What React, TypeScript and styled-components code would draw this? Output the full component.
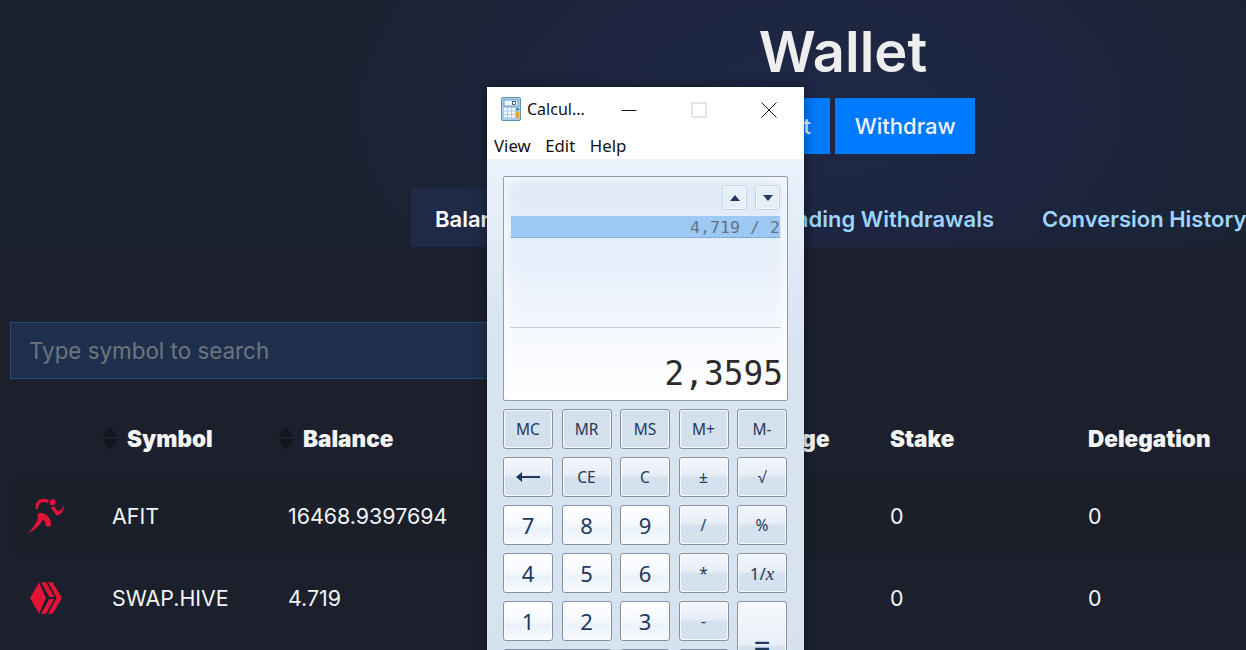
import React from "react";
import styled, { createGlobalStyle } from "styled-components";

const GlobalStyle = createGlobalStyle`
  html, body {
    margin: 0;
    height: 100%;
    background: #1b202c;
  }
  body {
    font-family: Inter, "Noto Sans", sans-serif;
    overflow: hidden;
  }
`;

const keypad = [
  { label: "MC", kind: "memory" },
  { label: "MR", kind: "memory" },
  { label: "MS", kind: "memory" },
  { label: "M+", kind: "memory" },
  { label: "M-", kind: "memory" },
  { label: "back", kind: "op" },
  { label: "CE", kind: "op" },
  { label: "C", kind: "op" },
  { label: "±", kind: "op" },
  { label: "√", kind: "op" },
  { label: "7", kind: "digit" },
  { label: "8", kind: "digit" },
  { label: "9", kind: "digit" },
  { label: "/", kind: "op" },
  { label: "%", kind: "op" },
  { label: "4", kind: "digit" },
  { label: "5", kind: "digit" },
  { label: "6", kind: "digit" },
  { label: "*", kind: "op" },
  { label: "1/x", kind: "op" },
  { label: "1", kind: "digit" },
  { label: "2", kind: "digit" },
  { label: "3", kind: "digit" },
  { label: "-", kind: "op" },
  { label: "=", kind: "equals" },
  { label: "0", kind: "zero" },
  { label: ",", kind: "digit" },
  { label: "+", kind: "op" },
];

function RunnerLogo() {
  return (
    <svg width="38" height="38" viewBox="80 235 115 113" fill="#e31337">
      <circle cx="158" cy="250" r="9" />
      <path d="M107 270 C103 250 118 232 146 243 L144 252 C128 246 116 250 113 270 Z" />
      <path d="M152 266 L162 262 L174 278 L184 272 L192 258 C192 278 178 292 170 290 Z" />
      <path d="M112 285 C125 278 142 286 150 302 C154 312 153 318 151 323 L136 322 C138 312 134 305 128 302 C122 318 104 332 83 345 C95 330 108 315 113 300 Z" />
    </svg>
  );
}

function HiveLogo() {
  return (
    <svg width="34" height="34" viewBox="27 24 102 102" fill="#e31337">
      <path d="M30 75 L57 28 L78 75 L57 122 Z" />
      <path d="M63 28 L78 28 L103 72 L88 72 Z" />
      <path d="M63 122 L78 122 L103 78 L88 78 Z" />
      <path d="M84 28 L98 28 L126 75 L98 122 L84 122 L110 75 Z" />
    </svg>
  );
}

function CalcIcon() {
  return (
    <svg width="20" height="24" viewBox="0 0 20 24">
      <rect x="0.5" y="0.5" width="19" height="23" rx="1.5" fill="#a9cde6" stroke="#5d93b8" />
      <rect x="3" y="3" width="14" height="6" fill="#eef7fd" stroke="#5a8fb5" strokeWidth="0.8" />
      <rect x="11.5" y="4.5" width="3" height="3" fill="none" stroke="#345" strokeWidth="0.8" />
      <g fill="#f5fafd">
        <rect x="3" y="11" width="3" height="2.5" />
        <rect x="7" y="11" width="3" height="2.5" />
        <rect x="11" y="11" width="3" height="2.5" />
        <rect x="3" y="14.5" width="3" height="2.5" />
        <rect x="7" y="14.5" width="3" height="2.5" />
        <rect x="11" y="14.5" width="3" height="2.5" />
        <rect x="3" y="18" width="3" height="2.5" />
        <rect x="7" y="18" width="3" height="2.5" />
        <rect x="11" y="18" width="3" height="2.5" />
      </g>
      <rect x="15" y="14.5" width="3" height="6.5" fill="#f0a431" />
      <rect x="15" y="11" width="3" height="2.5" fill="#4f8fc0" />
    </svg>
  );
}

function BackArrow() {
  return (
    <svg width="24" height="12" viewBox="0 0 24 12" fill="#1e395b">
      <path d="M0 6 L6 1 V5 H24 V7 H6 V11 Z" />
    </svg>
  );
}

function SortHeader({ children }: { children: React.ReactNode }) {
  return (
    <HeadLabel>
      <SortIcon viewBox="0 0 16 24" width="16" height="24">
        <path d="M8 0 L16 11 L0 11 Z" />
        <path d="M0 13 L16 13 L8 24 Z" />
      </SortIcon>
      {children}
    </HeadLabel>
  );
}

function keyContent(label: string) {
  if (label === "back") return <BackArrow />;
  if (label === "1/x") {
    return (
      <Reciprocal>
        1/<em>x</em>
      </Reciprocal>
    );
  }
  return label;
}

export default function App() {
  return (
    <Page>
      <GlobalStyle />
      <Hero>
        <Title>Wallet</Title>
        <Actions>
          <ActionButton>Deposit</ActionButton>
          <ActionButton>Withdraw</ActionButton>
        </Actions>
        <Tabs>
          <Tab $active>Balances</Tab>
          <Tab>Pending Withdrawals</Tab>
          <Tab>Conversion History</Tab>
        </Tabs>
      </Hero>

      <Content>
        <SearchInput placeholder="Type symbol to search" readOnly />
        <TableHead>
          <span />
          <SortHeader>Symbol</SortHeader>
          <SortHeader>Balance</SortHeader>
          <HeadText>Exchange</HeadText>
          <HeadText>Stake</HeadText>
          <HeadText>Delegation</HeadText>
        </TableHead>
        <Row $striped>
          <IconCell><RunnerLogo /></IconCell>
          <Cell>AFIT</Cell>
          <Cell>16468.9397694</Cell>
          <Cell>0</Cell>
          <Cell>0</Cell>
          <Cell>0</Cell>
        </Row>
        <Row>
          <IconCell><HiveLogo /></IconCell>
          <Cell>SWAP.HIVE</Cell>
          <Cell>4.719</Cell>
          <Cell>0</Cell>
          <Cell>0</Cell>
          <Cell>0</Cell>
        </Row>
      </Content>

      <CalcWindow>
        <TitleBar>
          <CalcIcon />
          <WindowTitle>Calcul...</WindowTitle>
          <WindowControls>
            <Control>
              <svg width="16" height="16" viewBox="0 0 16 16"><path d="M0.5 8.5 H15.5" stroke="#111" /></svg>
            </Control>
            <Control>
              <svg width="16" height="16" viewBox="0 0 16 16"><rect x="1" y="1" width="14" height="14" fill="none" stroke="#ccc" /></svg>
            </Control>
            <Control>
              <svg width="16" height="16" viewBox="0 0 16 16"><path d="M0.5 0.5 L15.5 15.5 M15.5 0.5 L0.5 15.5" stroke="#111" /></svg>
            </Control>
          </WindowControls>
        </TitleBar>
        <MenuBar>
          <span>View</span>
          <span>Edit</span>
          <span>Help</span>
        </MenuBar>
        <CalcBody>
          <Display>
            <SpinRow>
              <SpinButton>
                <svg width="10" height="6" viewBox="0 0 10 6"><path d="M5 0 L10 6 H0 Z" fill="#1e395b" /></svg>
              </SpinButton>
              <SpinButton>
                <svg width="10" height="6" viewBox="0 0 10 6"><path d="M0 0 H10 L5 6 Z" fill="#1e395b" /></svg>
              </SpinButton>
            </SpinRow>
            <HistoryLine>4,719 / 2</HistoryLine>
            <Divider />
            <ResultValue>2,3595</ResultValue>
          </Display>
          <Keypad>
            {keypad.map((key) => (
              <Key key={key.label} $kind={key.kind}>
                {keyContent(key.label)}
              </Key>
            ))}
          </Keypad>
        </CalcBody>
      </CalcWindow>
    </Page>
  );
}

const Page = styled.div`
  position: relative;
  width: 1246px;
  height: 650px;
  overflow: hidden;
  background: #1b202c;
  color: #f1f1f1;
`;

const Hero = styled.header`
  box-sizing: border-box;
  height: 247px;
  padding: 22px 0 0 440px;
  display: flex;
  flex-direction: column;
  align-items: center;
  background: radial-gradient(ellipse 520px 300px at 820px 110px, #1f2845 0%, #1d2540 45%, #1a2330 100%);
`;

const Title = styled.h1`
  margin: 0;
  height: 60px;
  font-size: 56px;
  line-height: 60px;
  font-weight: 600;
  color: #eeeeee;
`;

const Actions = styled.div`
  margin-top: 16px;
  display: flex;
  gap: 5px;
`;

const ActionButton = styled.button`
  height: 56px;
  padding: 0 19.5px;
  border: none;
  background: #007bff;
  color: #f3f3ff;
  font-family: inherit;
  font-size: 22px;
  font-weight: 500;
`;

const Tabs = styled.nav`
  margin-top: 35px;
  width: 864px;
  flex: none;
  display: flex;
`;

const Tab = styled.a<{ $active?: boolean }>`
  height: 58px;
  padding: 2px 24px 0;
  box-sizing: border-box;
  display: flex;
  align-items: center;
  white-space: nowrap;
  font-size: 22px;
  font-weight: 600;
  color: ${(p) => (p.$active ? "#ffffff" : "#9ed4ff")};
  background: ${(p) => (p.$active ? "#202a47" : "transparent")};
  &:first-child {
    width: 333px;
  }
`;

const Content = styled.main`
  padding: 75px 0 0 10px;
`;

const SearchInput = styled.input`
  box-sizing: border-box;
  display: block;
  width: 700px;
  height: 57px;
  padding: 0 18px;
  background: #1e2f4d;
  border: 1px solid #28497a;
  font-family: inherit;
  font-size: 22.4px;
  outline: none;
  &::placeholder {
    color: #6c757d;
    opacity: 1;
  }
`;

const tableColumns = "89px 176px 430px 172px 198px 171px";

const TableHead = styled.div`
  box-sizing: border-box;
  margin-top: 24px;
  height: 72px;
  padding-bottom: 2px;
  display: grid;
  grid-template-columns: ${tableColumns};
  align-items: center;
  font-size: 22.5px;
  font-weight: 900;
  color: #f4f4f4;
`;

const HeadLabel = styled.span`
  display: flex;
  align-items: center;
  gap: 9px;
`;

const HeadText = styled.span`
  padding-left: 13px;
`;

const SortIcon = styled.svg`
  fill: #11161f;
  flex: none;
  margin-left: 3px;
`;

const Row = styled.div<{ $striped?: boolean }>`
  height: 82px;
  display: grid;
  grid-template-columns: ${tableColumns};
  align-items: center;
  background: ${(p) => (p.$striped ? "#1a1f2a" : "transparent")};
`;

const Cell = styled.span`
  padding-left: 13px;
  font-size: 21.4px;
  font-weight: 400;
  color: #f4f4f4;
`;

const IconCell = styled.span`
  display: flex;
  justify-content: center;
  padding-right: 17px;
`;

const CalcWindow = styled.section`
  position: absolute;
  top: 87px;
  left: 487px;
  width: 317px;
  height: 640px;
  background: #fff;
  box-shadow: 0 0 12px rgba(0, 0, 0, 0.45);
  font-family: "Noto Sans", "Open Sans", sans-serif;
  color: #111;
`;

const TitleBar = styled.div`
  height: 44px;
  padding: 0 27px 0 14px;
  display: flex;
  align-items: center;
  font-size: 16px;
`;

const WindowTitle = styled.span`
  margin-left: 6px;
`;

const WindowControls = styled.div`
  margin-left: auto;
  display: flex;
  gap: 54px;
`;

const Control = styled.span`
  display: block;
  width: 16px;
  height: 16px;
`;

const MenuBar = styled.div`
  height: 28px;
  padding: 0 7px;
  display: flex;
  gap: 14.5px;
  align-items: flex-start;
  font-size: 16.8px;
  line-height: 30px;
  border-bottom: 1px solid #f1f1f1;
`;

const CalcBody = styled.div`
  box-sizing: border-box;
  height: 568px;
  padding: 16px;
  background: linear-gradient(#eaf2fc 0, #d9e4f1 180px, #d6e2ef 100%);
`;

const Display = styled.div`
  box-sizing: border-box;
  height: 225px;
  padding: 8px 7px 0;
  border: 1px solid #8e9bb0;
  border-radius: 2px;
  background: linear-gradient(#dfe9f7 0%, #e8f0fb 40%, #f3f7fe 65%, #ffffff 100%);
  box-shadow: inset 0 0 12px 3px rgba(255, 255, 255, 0.8);
`;

const SpinRow = styled.div`
  display: flex;
  justify-content: flex-end;
  gap: 8px;
`;

const SpinButton = styled.div`
  box-sizing: border-box;
  width: 25px;
  height: 25px;
  display: flex;
  align-items: center;
  justify-content: center;
  background: #e6eef8;
  border: 1px solid #c9d4e2;
  border-radius: 2px;
  box-shadow: inset 0 0 0 1px #f3f7fc;
`;

const HistoryLine = styled.div`
  box-sizing: border-box;
  margin-top: 6px;
  height: 22px;
  background: #9dc9f4;
  border-bottom: 1px dotted #5b93c4;
  text-align: right;
  font-family: "DejaVu Sans Mono", "Liberation Mono", monospace;
  font-size: 16.6px;
  line-height: 24px;
  color: #66727f;
`;

const Divider = styled.div`
  margin: 89px -1px 0;
  height: 1px;
  background: #c8ccd2;
`;

const ResultValue = styled.div`
  margin: 22px -3px 0 0;
  text-align: right;
  font-family: "DejaVu Sans Mono", "Liberation Mono", monospace;
  font-size: 32.8px;
  line-height: 48px;
  color: #2b2b2b;
`;

const Keypad = styled.div`
  margin-top: 8px;
  display: grid;
  grid-template-columns: repeat(5, 50px);
  grid-auto-rows: 40px;
  column-gap: 8.5px;
  row-gap: 8px;
`;

const keyBackgrounds: Record<string, string> = {
  memory: "#d5e0ed",
  op: "linear-gradient(#f4f7fc 0%, #e6edf6 48%, #d5e1ee 50%, #d5e1ee 100%)",
  digit: "linear-gradient(#ffffff 0%, #f4f8fe 50%, #eaf2fb 60%, #f8fbff 100%)",
  zero: "linear-gradient(#ffffff 0%, #f4f8fe 50%, #eaf2fb 60%, #f8fbff 100%)",
  equals: "linear-gradient(#f6f8fc 0%, #e9eff7 50%, #d5e1ee 52%, #d5e1ee 100%)",
};

const Key = styled.div<{ $kind: string }>`
  box-sizing: border-box;
  display: flex;
  align-items: center;
  justify-content: center;
  border: 1px solid #8592a6;
  border-radius: 3px;
  box-shadow: inset 0 0 0 1px rgba(255, 255, 255, 0.75);
  background: ${(p) => keyBackgrounds[p.$kind]};
  color: #1e395b;
  font-size: ${(p) => (p.$kind === "digit" || p.$kind === "zero" ? "22px" : "15.5px")};
  ${(p) => (p.$kind === "equals" ? "grid-row: span 2; grid-column: 5; font-size: 30px;" : "")}
  ${(p) => (p.$kind === "zero" ? "grid-column: span 2;" : "")}
`;

const Reciprocal = styled.span`
  font-size: 17px;
  em {
    font-family: "Liberation Serif", serif;
    font-size: 19px;
  }
`;
